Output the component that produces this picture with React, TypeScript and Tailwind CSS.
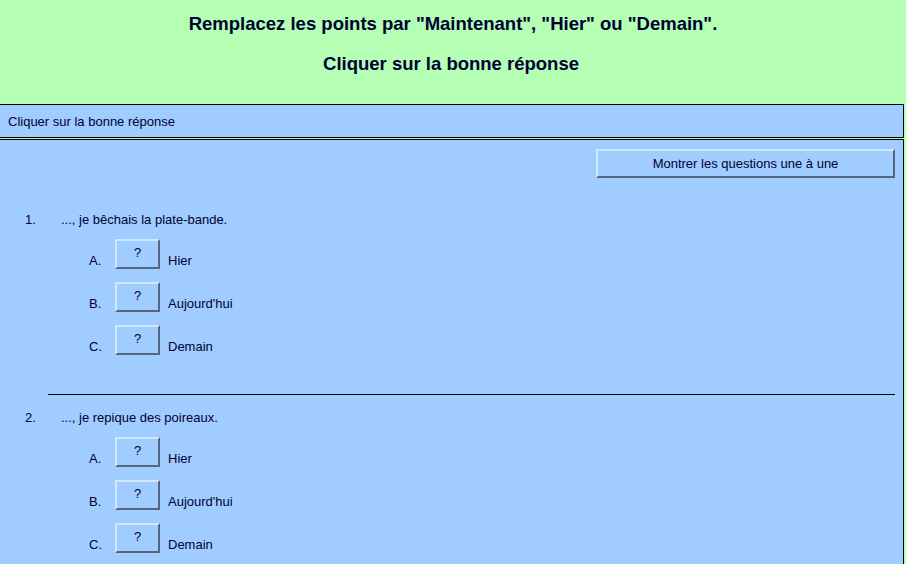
import React from "react";

const questions = [
  { n: "1.", text: "..., je bêchais la plate-bande." },
  { n: "2.", text: "..., je repique des poireaux." },
];
const options = [
  { l: "A.", t: "Hier" },
  { l: "B.", t: "Aujourd'hui" },
  { l: "C.", t: "Demain" },
];

function QButton() {
  return (
    <button className="mt-[11px] w-[45px] h-[30px] bg-[#a0ccff] border-2 border-t-[#d2e8ff] border-l-[#d2e8ff] border-b-[#56667e] border-r-[#56667e] text-[13px] leading-[14px] flex justify-center pt-[5px] text-[#000033]">
      ?
    </button>
  );
}

function Question({ n, text }: { n: string; text: string }) {
  return (
    <div>
      <div className="flex h-[20px] items-center pt-[3px] text-[13px]">
        <span className="w-[61px] pl-[25px]">{n}</span>
        <span>{text}</span>
      </div>
      {options.map((o) => (
        <div key={o.l} className="flex h-[43px] items-start">
          <span className="w-[115px] pl-[89px] mt-[23px] h-[20px] leading-[20px] text-[13px]">{o.l}</span>
          <QButton />
          <span className="ml-[8px] mt-[23px] h-[20px] leading-[20px] text-[13px]">{o.t}</span>
        </div>
      ))}
    </div>
  );
}

export default function App() {
  return (
    <div className="w-[906px] h-[564px] overflow-hidden bg-[#b4ffb4] text-[#000033] font-['Liberation_Sans',Arial,sans-serif]">
      <div className="h-[104px] flex flex-col items-center pt-[13px]">
        <div className="text-[18.5px] font-bold leading-[22px]">
          Remplacez les points par "Maintenant", "Hier" ou "Demain".
        </div>
        <div className="text-[18.5px] font-bold leading-[22px] mt-[18px] pr-[4px]">Cliquer sur la bonne réponse</div>
      </div>
      <div className="ml-[-1px] w-[905px] h-[34px] border border-black bg-[#a0ccff] flex items-center pl-[8px] pt-[1px] text-[13px]">
        Cliquer sur la bonne réponse
      </div>
      <div className="ml-[-1px] w-[905px] h-[440px] mt-[1px] border border-black bg-[#a0ccff] pt-[9px]">
        <div className="flex justify-end pr-[8px]">
          <button className="w-[299px] h-[29px] bg-[#a0ccff] border-2 border-t-[#d2e8ff] border-l-[#d2e8ff] border-b-[#56667e] border-r-[#56667e] text-[13px] text-[#000033]">
            Montrer les questions une à une
          </button>
        </div>
        <div className="mt-[30px]">
          <Question n={questions[0].n} text={questions[0].text} />
          <div className="mt-[37px] ml-[48px] mr-[8px] h-px bg-black" />
          <div className="mt-[11px]">
            <Question n={questions[1].n} text={questions[1].text} />
          </div>
        </div>
      </div>
    </div>
  );
}
